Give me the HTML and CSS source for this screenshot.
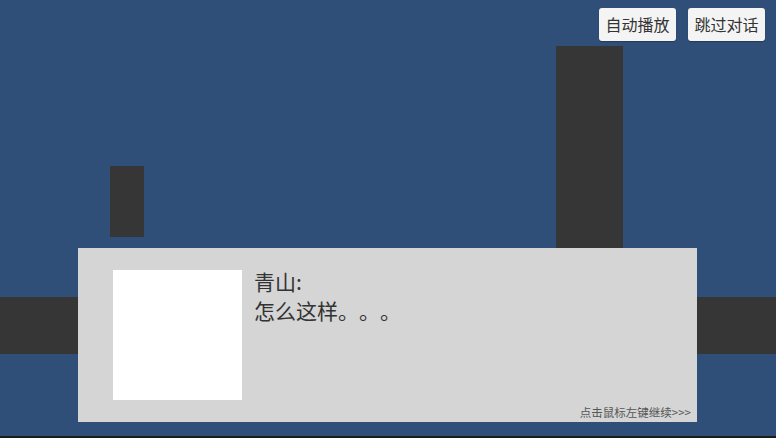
FILE: index.html
```html
<!DOCTYPE html>
<html lang="zh">
<head>
<meta charset="utf-8">
<link rel="stylesheet" href="styles.css">
</head>
<body>
<div class="scene">
  <div class="block pillar-small"></div>
  <div class="block pillar-tall"></div>
  <div class="block ground"></div>
  <div class="toolbar">
    <button class="btn">自动播放</button>
    <button class="btn">跳过对话</button>
  </div>
  <div class="dialog">
    <div class="portrait"></div>
    <div class="speech">
      <div class="name">青山:</div>
      <div class="line">怎么这样。。。</div>
    </div>
    <div class="hint">点击鼠标左键继续&gt;&gt;&gt;</div>
  </div>
  <div class="bottom-edge"></div>
</div>
</body>
</html>
```
FILE: styles.css
```css
html, body {
  margin: 0;
  padding: 0;
  width: 776px;
  height: 438px;
  overflow: hidden;
  font-family: "Noto Sans CJK SC", "Noto Sans", sans-serif;
  text-spacing-trim: space-all;
}
.scene {
  position: relative;
  width: 776px;
  height: 438px;
  background: #2f4e78;
}
.block {
  position: absolute;
  background: #363636;
}
.pillar-small { left: 110px; top: 166px; width: 34px; height: 71px; }
.pillar-tall { left: 556px; top: 46px; width: 67px; height: 210px; }
.ground { left: 0; top: 297px; width: 776px; height: 57px; }
.toolbar {
  position: absolute;
  top: 8px;
  right: 11px;
  display: flex;
  gap: 12px;
}
.btn {
  width: 77px;
  height: 33px;
  padding: 0;
  border: none;
  border-radius: 3px;
  background: #f4f4f4;
  color: #333;
  font-family: inherit;
  font-size: 16px;
  line-height: 33px;
  box-shadow: 0 1px 1px rgba(0,0,0,0.25);
}
.dialog {
  position: absolute;
  left: 78px;
  top: 248px;
  width: 619px;
  height: 174px;
  background: #d5d5d5;
  display: flex;
  padding: 22px 0 0 35px;
  box-sizing: border-box;
  gap: 12px;
}
.portrait {
  width: 129px;
  height: 130px;
  background: #fff;
  flex: none;
}
.speech {
  color: #333;
  font-size: 21px;
  line-height: 29px;
  margin-top: -3px;
  text-spacing-trim: space-all;
}
.hint {
  position: absolute;
  right: 6px;
  bottom: 3px;
  font-size: 11.5px;
  color: #555;
  line-height: 14px;
}
.bottom-edge {
  position: absolute;
  left: 0;
  bottom: 0;
  width: 776px;
  height: 2px;
  background: #1c1c1c;
}
```
